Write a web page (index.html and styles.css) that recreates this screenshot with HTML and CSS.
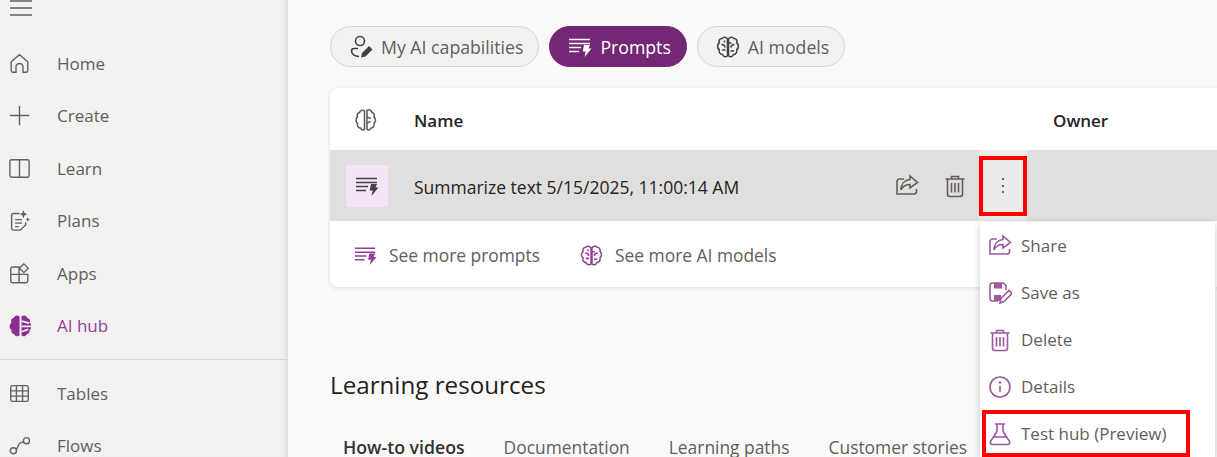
FILE: index.html
```html
<!DOCTYPE html>
<html>
<head>
    <title>AI hub</title>
    <link rel="stylesheet" href="styles.css">
</head>
<body>
    <svg class="sprite" xmlns="http://www.w3.org/2000/svg">
        <symbol id="i-prompt" viewBox="0 0 24 24">
            <path class="ln" d="M1 4.500h21M1 8.500h21M1 12.500h12M1 16.500h10"/>
            <path class="fl" d="M16 10h6l-1.500 3.500h3L16.500 22l1.200-5.500h-3z"/>
        </symbol>
        <symbol id="i-brain" viewBox="0 0 24 24">
            <path class="ln" d="M11.500 4C10.500 2 7.500 1.500 6 3.500 3.500 3.500 2.500 6 3.200 8 1 9.500 1 13 3.200 14.500 2.500 17 4 19.500 6.500 19.500 7.500 22 10.500 22.500 11.500 20.500zM12.500 4c1-2 4-2.500 5.500-.5 2.500 0 3.500 2.500 2.800 4.500 2.200 1.500 2.200 5 0 6.500.7 2.500-.8 5-3.300 5-1 2.500-4 3-5 1z"/>
            <path class="ln" d="M5.500 9.500c2 0 3.500 1 3.500 3M18.500 9.500c-2 0-3.500 1-3.500 3M6 15h3.500M14.500 16h3.500M12.500 8h3M8.500 5.500v2"/>
        </symbol>
        <symbol id="i-brain-half" viewBox="0 0 24 24">
            <path class="ln" d="M10.500 3C8.500 1.500 6 2.500 5.500 4.500 3.500 5 2.500 7 3.500 9 1.500 10.500 1.500 14 3.500 15.500 3 18 4.500 20 6.500 20 7.500 22.500 9.500 22.500 10.500 21zM13 2.500c2-1.500 4.500-.5 5 2 2 .5 3 2.500 2 4.500 2 1.500 2 5 0 6.500.5 2.500-1 4.500-3 4.500-1 2.500-3 2.500-4 1z"/>
            <path class="ln" d="M13 9l4 1.500M13 15l3.500-1.500"/>
        </symbol>
        <symbol id="i-share" viewBox="0 0 24 24">
            <path class="ln" d="M9 5H4.500A2.500 2.500 0 0 0 2 7.500V20h17a2.500 2.500 0 0 0 2.500-2.500V15"/>
            <path class="ln" d="M15 2l7.500 6.500L15 14v-3.500c-4 0-7 1.500-9 5.500 0-6 3.500-10 9-10.500z"/>
        </symbol>
        <symbol id="i-trash" viewBox="0 0 24 24">
            <path class="ln" d="M2.500 5h19M8.500 5V2.500h7V5M4.500 5v15A2.500 2.500 0 0 0 7 22.500h10a2.500 2.500 0 0 0 2.500-2.500V5"/>
            <path class="ln" d="M8.500 9v9.500M12 9v9.500M15.500 9v9.500"/>
        </symbol>
        <symbol id="i-save" viewBox="0 0 24 24">
            <path class="ln" d="M10 20H4.500A2.500 2.500 0 0 1 2 17.500v-13A2.500 2.500 0 0 1 4.500 2h11L18 4.500V9"/>
            <path class="fl" d="M6 2h8v5.500H6zM6 14h7v6H6z"/>
            <path class="ln" d="M12 22l1-4.500 8-8 3 3-8 8z"/>
        </symbol>
        <symbol id="i-info" viewBox="0 0 24 24">
            <circle class="ln" cx="12" cy="12" r="10"/>
            <path class="ln" d="M12 11v6"/>
            <circle class="fl" cx="12" cy="7.500" r="1.200"/>
        </symbol>
        <symbol id="i-flask" viewBox="0 0 24 24">
            <path class="ln" d="M7 2h10M9 2v7.500L2.500 19.500A2 2 0 0 0 4.200 22.500h15.600a2 2 0 0 0 1.700-3L15 9.500V2M6 15h12"/>
        </symbol>
    </svg>

    <div class="app">
        <aside class="sidebar">
            <svg class="hamburger" viewBox="0 0 22 16"><path d="M0 1h22M0 8h22M0 15h22"/></svg>
            <nav class="nav-group">
                <a class="nav-item">
                    <svg class="nav-icon" viewBox="0 0 24 24"><path class="ln" d="M2.500 10L12 2l9.500 8v10a2 2 0 0 1-2 2H16v-6a4 4 0 0 0-8 0v6H4.500a2 2 0 0 1-2-2z"/></svg>
                    <span>Home</span>
                </a>
                <a class="nav-item">
                    <svg class="nav-icon" viewBox="0 0 24 24"><path class="ln" d="M12 1v22M1 12h22"/></svg>
                    <span>Create</span>
                </a>
                <a class="nav-item">
                    <svg class="nav-icon" viewBox="0 0 24 24"><path class="ln" d="M12 2v20M3 2h18a2 2 0 0 1 2 2v16a2 2 0 0 1-2 2H3a2 2 0 0 1-2-2V4a2 2 0 0 1 2-2z"/></svg>
                    <span>Learn</span>
                </a>
                <a class="nav-item">
                    <svg class="nav-icon" viewBox="0 0 24 24"><path class="ln" d="M12 4H5a2 2 0 0 0-2 2v15a2 2 0 0 0 2 2h8l6-6v-3M7 11h8M7 15h8M7 19h4"/><path class="fl" d="M16.500 0l1.300 3.500 3.200 1.300-3.200 1.300-1.300 3.500-1.300-3.500L12 4.800l3.200-1.300zM21.500 8l.8 2 1.700.8-1.700.8-.8 2-.8-2-1.700-.8 1.700-.8z"/></svg>
                    <span>Plans</span>
                </a>
                <a class="nav-item">
                    <svg class="nav-icon" viewBox="0 0 24 24"><path class="ln" d="M2 6.500A2 2 0 0 1 4 4.500h7.500v18H4a2 2 0 0 1-2-2zM2 13h19.500v7.500a2 2 0 0 1-2 2h-8M17 1l5 5-5 5-5-5z"/></svg>
                    <span>Apps</span>
                </a>
                <a class="nav-item nav-item-active">
                    <svg class="nav-icon nav-icon-large" viewBox="0 0 24 24"><path class="brain-fill" d="M11 2.500C8.500.5 5.800 1.500 5 4 2.500 4.500 1.500 7 2.500 9 0 10.500 0 15 2.500 16.500 2 19 3.500 21 5.500 21c1 2.500 4 3 5.500 1zM13 2.500c2.500-2 5.200-1 6 1.500 2.500.5 3.500 3 2.500 5 2.500 1.500 2.500 6 0 7.500.5 2.500-1 4.500-3 4.500-1 2.500-4 3-5.500 1z"/><path class="brain-cut" d="M13 7.500l8 2M13 13h11M13 18.500l7-2.500"/></svg>
                    <span>AI hub</span>
                </a>
            </nav>
            <hr class="nav-divider">
            <nav class="nav-group">
                <a class="nav-item">
                    <svg class="nav-icon" viewBox="0 0 24 24"><path class="ln" d="M4 3h16a2 2 0 0 1 2 2v14a2 2 0 0 1-2 2H4a2 2 0 0 1-2-2V5a2 2 0 0 1 2-2zM2 9h20M2 15h20M8.500 3v18M15.500 3v18"/></svg>
                    <span>Tables</span>
                </a>
                <a class="nav-item">
                    <svg class="nav-icon" viewBox="0 0 24 24"><circle class="ln" cx="5" cy="18" r="3.500"/><circle class="ln" cx="20" cy="6.500" r="3.500"/><path class="ln" d="M8 16c3-1 2-6 5-7 1.500-.5 2.500-1 3.500-1.500"/></svg>
                    <span>Flows</span>
                </a>
            </nav>
        </aside>

        <main class="content">
            <div class="pills">
                <a class="pill">
                    <svg class="pill-icon" viewBox="0 0 24 24"><circle class="ln" cx="11" cy="6" r="4.500"/><path class="ln" d="M9 13.500H5a2.500 2.500 0 0 0-2.500 2.500c0 3 3 5.500 7.500 5.500"/><path class="fl" d="M12 22.500l1-4.500 7-7 3.500 3.500-7 7z"/></svg>
                    My AI capabilities
                </a>
                <a class="pill pill-active">
                    <svg class="pill-icon"><use href="#i-prompt"/></svg>
                    Prompts
                </a>
                <a class="pill">
                    <svg class="pill-icon"><use href="#i-brain"/></svg>
                    AI models
                </a>
            </div>

            <section class="card">
                <div class="card-head">
                    <div class="col-type"><svg class="head-icon"><use href="#i-brain-half"/></svg></div>
                    <div class="col-name">Name</div>
                    <div class="col-owner">Owner</div>
                </div>
                <div class="card-row">
                    <div class="col-type"><span class="thumb"><svg class="thumb-icon"><use href="#i-prompt"/></svg></span></div>
                    <div class="row-name">Summarize text 5/15/2025, 11:00:14 AM</div>
                    <button class="row-btn"><svg class="row-icon"><use href="#i-share"/></svg></button>
                    <button class="row-btn"><svg class="row-icon"><use href="#i-trash"/></svg></button>
                    <div class="row-more">
                        <span class="dots"><i></i><i></i><i></i></span>
                        <ul class="menu">
                            <li class="menu-item"><svg class="menu-icon"><use href="#i-share"/></svg>Share</li>
                            <li class="menu-item"><svg class="menu-icon"><use href="#i-save"/></svg>Save as</li>
                            <li class="menu-item"><svg class="menu-icon"><use href="#i-trash"/></svg>Delete</li>
                            <li class="menu-item"><svg class="menu-icon"><use href="#i-info"/></svg>Details</li>
                            <li class="menu-item menu-item-marked"><svg class="menu-icon"><use href="#i-flask"/></svg>Test hub (Preview)</li>
                        </ul>
                    </div>
                </div>
                <div class="card-foot">
                    <a class="foot-link"><svg class="foot-icon"><use href="#i-prompt"/></svg>See more prompts</a>
                    <a class="foot-link"><svg class="foot-icon"><use href="#i-brain"/></svg>See more AI models</a>
                </div>
            </section>

            <h2 class="section-title">Learning resources</h2>
            <div class="tabs">
                <a class="tab tab-active">How-to videos</a>
                <a class="tab">Documentation</a>
                <a class="tab">Learning paths</a>
                <a class="tab">Customer stories</a>
            </div>
        </main>
    </div>
</body>
</html>
```

FILE: styles.css
```css
/* Global styles */
html, body {
    margin: 0;
    padding: 0;
    height: 457px;
    overflow: hidden;
}

body {
    font-family: "Open Sans", "Noto Sans", Arial, sans-serif;
    font-size: 17px;
    color: #323130;
    background-color: #faf9f8;
}

a {
    color: inherit;
    text-decoration: none;
}

.sprite {
    display: none;
}

/* Icon strokes, shared by every svg */
.ln {
    fill: none;
    stroke: currentColor;
    stroke-width: 1.6;
}

.fl {
    fill: currentColor;
}

.app {
    display: flex;
    height: 457px;
}

/* Sidebar */
.sidebar {
    flex: 0 0 288px;
    background-color: #f3f2f1;
    box-shadow: inset -7px 0 6px -5px rgba(0, 0, 0, 0.1);
    color: #605e5c;
}

.hamburger {
    display: block;
    width: 22px;
    height: 16px;
    margin: 0 0 21px 10px;
}

.hamburger path {
    fill: none;
    stroke: #616161;
    stroke-width: 1.6;
}

.nav-item {
    display: flex;
    align-items: center;
    height: 52.5px;
    padding-left: 9px;
}

.nav-icon {
    width: 21px;
    height: 21px;
    margin-right: 27px;
    color: #616161;
}

.nav-icon-large {
    width: 23px;
    height: 23px;
    margin-right: 25px;
}

.nav-item-active {
    color: #8f3f97;
}

.nav-item-active .nav-icon {
    color: #8f3f97;
}

.brain-fill {
    fill: #8a2f90;
}

.brain-cut {
    fill: none;
    stroke: #f3f2f1;
    stroke-width: 1.8;
}

.nav-divider {
    height: 1px;
    margin: 7px 0;
    border: 0;
    background-color: #d8d6d4;
}

/* Main area */
.content {
    flex: 1;
    min-width: 0;
    padding: 26px 0 0 42px;
}

.pills {
    display: flex;
    gap: 10px;
}

.pill {
    display: flex;
    align-items: center;
    height: 39px;
    padding: 0 15px 0 18px;
    border: 1px solid #d6d4d2;
    border-radius: 21px;
    font-size: 17.7px;
    background-color: #f3f2f1;
    color: #605e5c;
}

.pill-icon {
    width: 24px;
    height: 24px;
    margin-right: 8px;
    color: #424242;
}

.pill-active {
    border-color: #742774;
    background-color: #742774;
    color: #fff;
}

.pill-active .pill-icon {
    color: #fff;
}

/* Card with the prompt table */
.card {
    margin: 21px -30px 0 0;
    border-radius: 8px;
    background-color: #fff;
    box-shadow: 0 1px 4px rgba(0, 0, 0, 0.12);
}

.card-head {
    display: flex;
    align-items: center;
    height: 62px;
    padding-top: 2px;
    box-sizing: border-box;
    font-weight: 600;
    color: #242424;
}

.col-type {
    display: flex;
    flex: 0 0 84px;
    padding-left: 16px;
    box-sizing: border-box;
}

.col-name {
    flex: 0 0 639px;
}

.head-icon {
    width: 24px;
    height: 24px;
    margin-left: 8px;
    color: #605e5c;
}

.card-row {
    display: flex;
    align-items: center;
    height: 71px;
    background-color: #e1dfdd;
}

.thumb {
    display: flex;
    align-items: center;
    justify-content: center;
    width: 42px;
    height: 42px;
    border-radius: 2px;
    background-color: #f5e3f7;
}

.thumb-icon {
    width: 24px;
    height: 24px;
    color: #424242;
}

.row-name {
    flex: 0 0 469px;
    padding-top: 2px;
    font-size: 17.5px;
    color: #242424;
}

.row-btn {
    width: 48px;
    height: 48px;
    padding: 0;
    border: 0;
    background: none;
    color: #605e5c;
}

.row-icon {
    display: block;
    width: 24px;
    height: 24px;
    margin: auto;
}

.row-more {
    position: relative;
    display: flex;
    align-items: center;
    justify-content: center;
    width: 48px;
    height: 71px;
    background-color: #edebe9;
}

/* Red annotation box over the button */
.row-more::after {
    content: "";
    position: absolute;
    top: 6px;
    left: 0;
    right: 0;
    bottom: 5px;
    border: 4px solid #f00;
}

.dots {
    display: flex;
    flex-direction: column;
    gap: 4.500px;
}

.dots i {
    width: 2px;
    height: 2px;
    background-color: #7a6a60;
}

/* Drop-down menu */
.menu {
    position: absolute;
    top: 72px;
    left: 1px;
    z-index: 2;
    width: 235px;
    height: 235px;
    margin: 0;
    padding: 0;
    list-style: none;
    background-color: #fff;
    box-shadow: 0 2px 8px rgba(0, 0, 0, 0.2);
}

.menu-item {
    position: relative;
    display: flex;
    align-items: center;
    height: 47px;
    padding-left: 8px;
    color: #605e5c;
}

.menu-icon {
    width: 24px;
    height: 24px;
    margin-right: 9px;
    color: #9b5a9f;
}

.menu-item-marked::after {
    content: "";
    position: absolute;
    top: 0;
    left: 2px;
    width: 200px;
    height: 39px;
    border: 4px solid #f00;
}

/* Card footer links */
.card-foot {
    display: flex;
    align-items: center;
    gap: 40px;
    height: 66px;
    padding: 2px 0 0 24px;
    box-sizing: border-box;
    font-size: 17.4px;
    color: #605e5c;
}

.foot-link {
    display: flex;
    align-items: center;
}

.foot-icon {
    width: 23px;
    height: 23px;
    margin-right: 12px;
    color: #8f3f97;
}

/* Learning resources */
.section-title {
    margin: 80px 0 0;
    font-size: 24.2px;
    font-weight: 500;
    line-height: 36px;
    color: #201f1e;
}

.tabs {
    display: flex;
    gap: 39px;
    margin-top: 34px;
    padding-left: 13px;
    font-size: 17.4px;
    line-height: 20px;
    color: #605e5c;
}

.tab-active {
    font-size: 17.700px;
    font-weight: 600;
    color: #323130;
}
```
